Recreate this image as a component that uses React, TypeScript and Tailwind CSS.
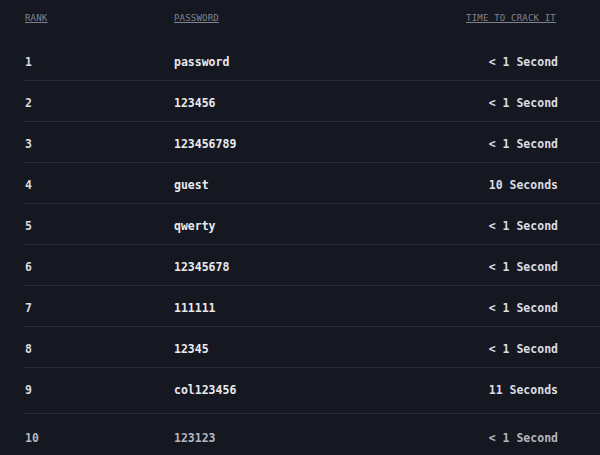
import React from "react";

const rows: [string, string, string][] = [
  ["1", "password", "< 1 Second"],
  ["2", "123456", "< 1 Second"],
  ["3", "123456789", "< 1 Second"],
  ["4", "guest", "10 Seconds"],
  ["5", "qwerty", "< 1 Second"],
  ["6", "12345678", "< 1 Second"],
  ["7", "111111", "< 1 Second"],
  ["8", "12345", "< 1 Second"],
  ["9", "col123456", "11 Seconds"],
];

export default function App() {
  return (
    <div
      className="w-[600px] h-[455px] overflow-hidden bg-[#161821] pl-[25px]"
      style={{ fontFamily: '"DejaVu Sans Mono", "Liberation Mono", monospace' }}
    >
      <div className="h-[40px] flex items-start pt-[12px] text-[9px] text-[#80838f] underline uppercase tracking-[0.2px]">
        <div className="w-[149px]">Rank</div>
        <div className="flex-1">Password</div>
        <div className="pr-[44px]">Time to crack it</div>
      </div>
      {rows.map(([r, p, t], i) => (
        <div
          key={r}
          className={
            "flex items-center border-b border-[#2a2d37] pt-[6px] text-[11.5px] font-bold text-[#e9eaee] " +
            (i === 8 ? "h-[46px] pb-[5px]" : "h-[41px]")
          }
        >
          <div className="w-[149px] text-[#d9dae0]">{r}</div>
          <div className="flex-1">{p}</div>
          <div className="pr-[42px] text-[#dcdde2]">{t}</div>
        </div>
      ))}
      <div className="flex items-center h-[44px] pt-[6px] text-[11.5px] font-bold text-[#b3b6bf]">
        <div className="w-[149px]">10</div>
        <div className="flex-1">123123</div>
        <div className="pr-[42px]">&lt; 1 Second</div>
      </div>
    </div>
  );
}
